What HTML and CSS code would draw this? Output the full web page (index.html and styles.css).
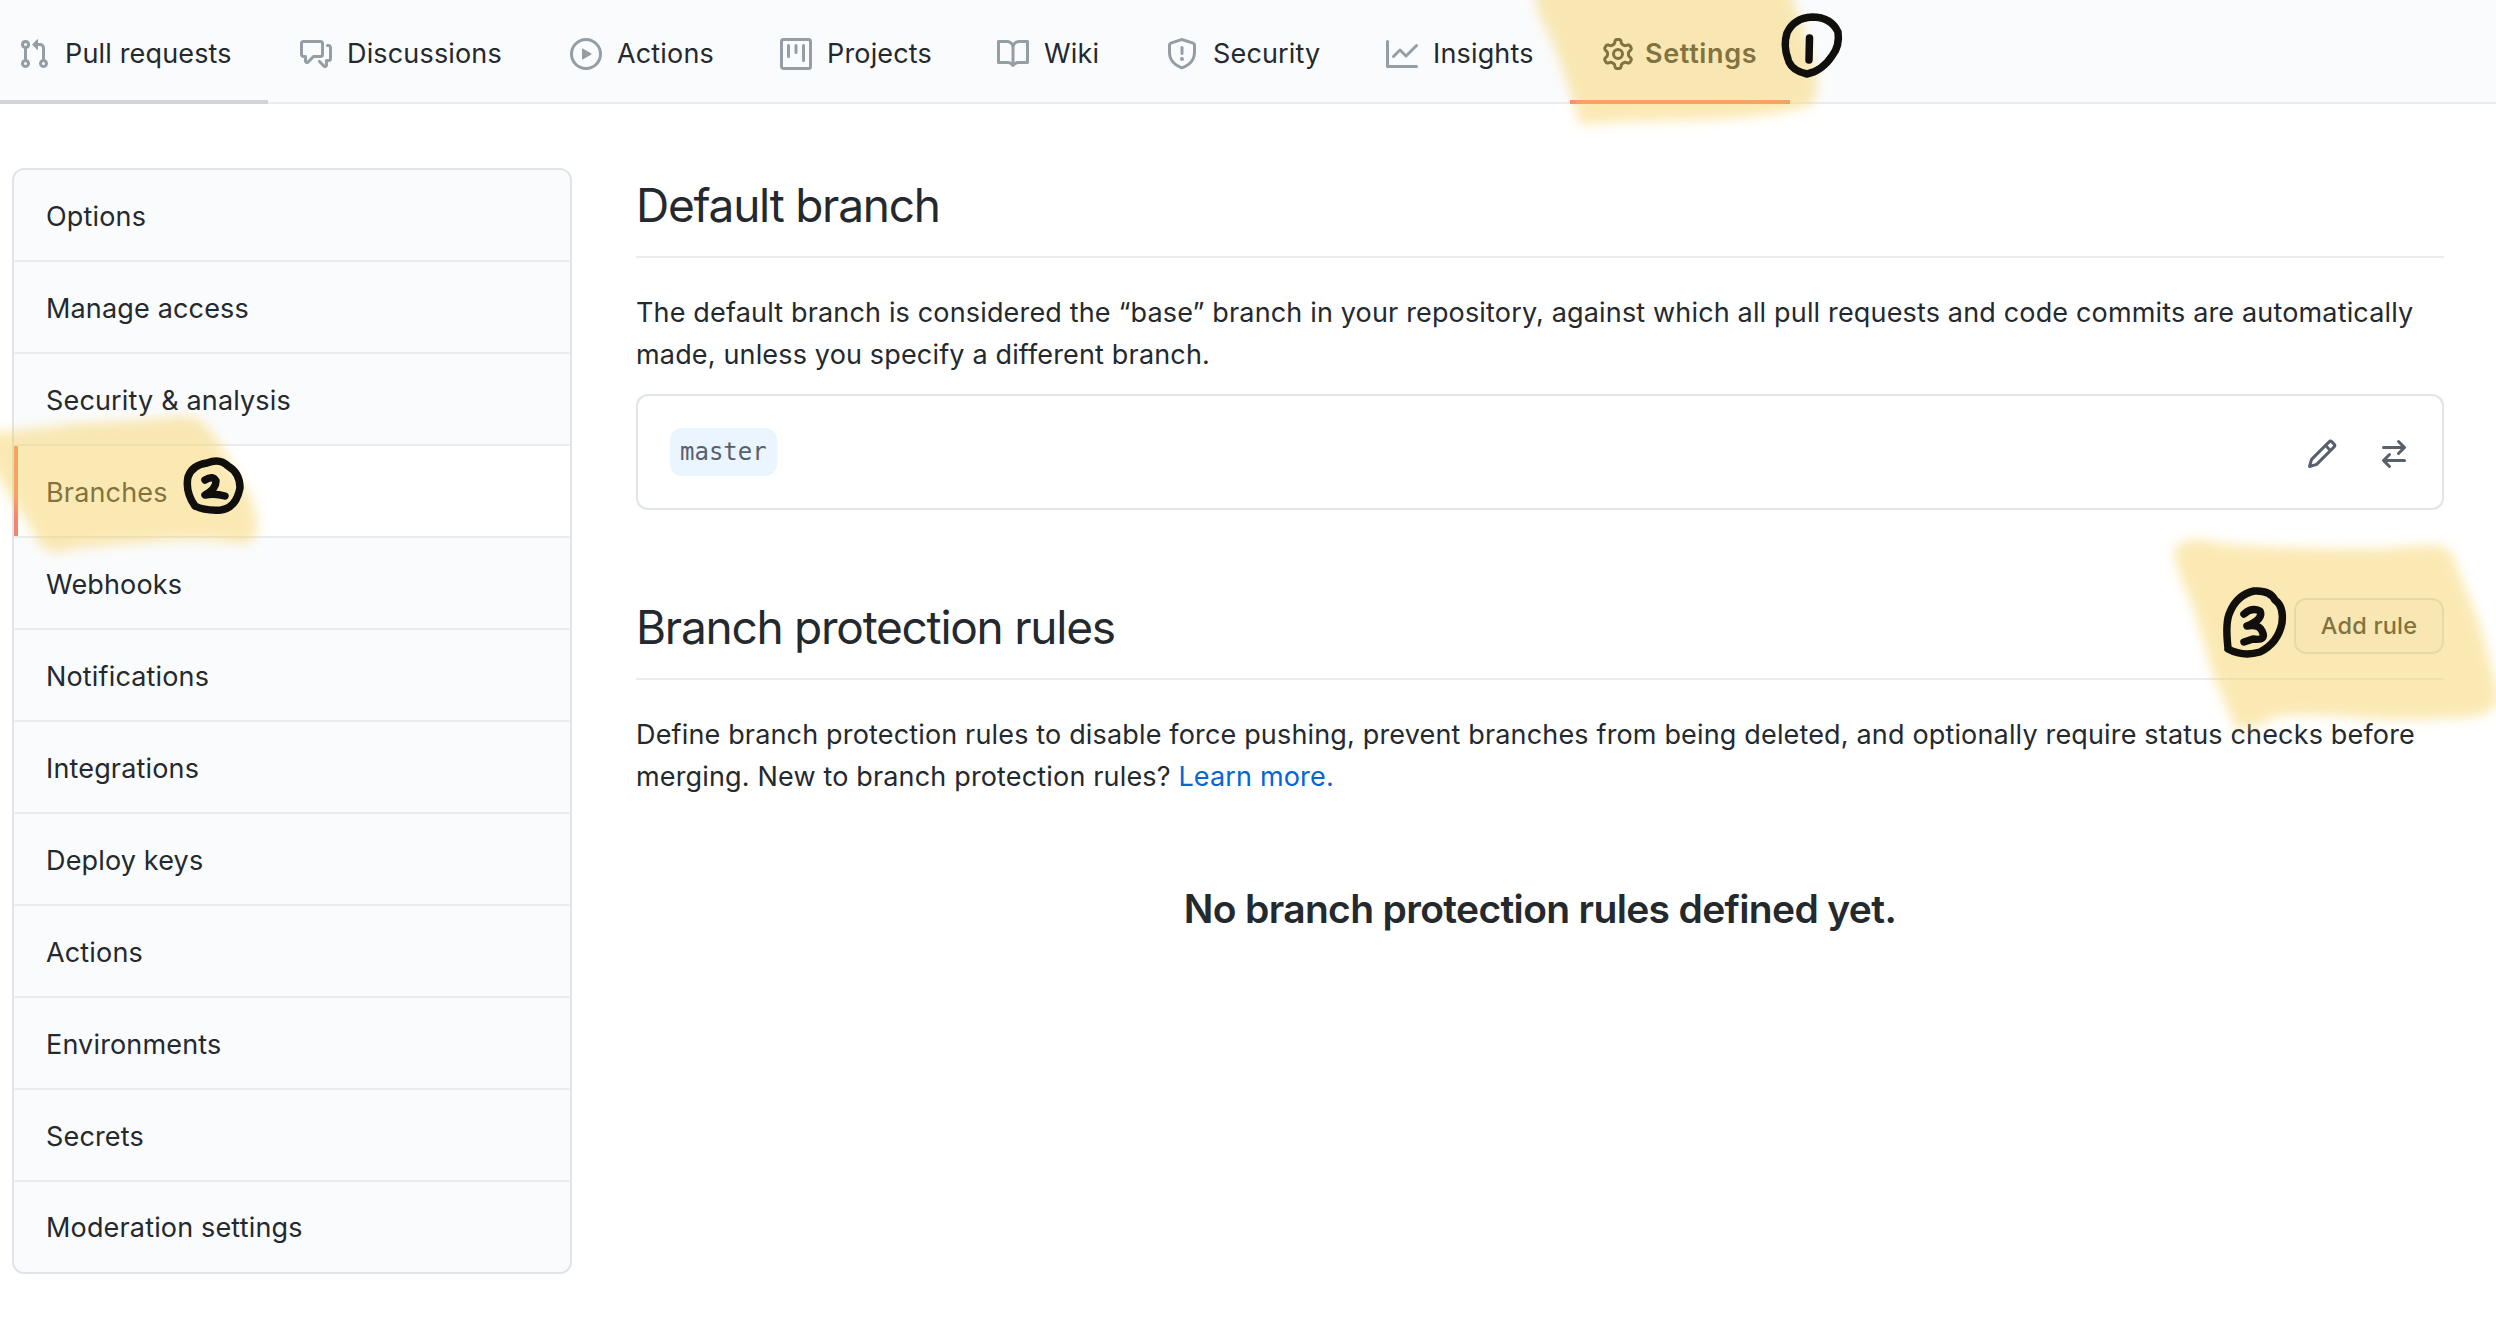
FILE: index.html
```html
<!DOCTYPE html>
<html lang="en">
<head>
<meta charset="utf-8">
<title>Branches</title>
<link rel="stylesheet" href="styles.css">
</head>
<body>
<nav class="tabs">
  <a class="tab tab-hover"><svg class="icon" viewBox="0 0 16 16"><path fill-rule="evenodd" d="M7.177 3.073L9.573.677A.25.25 0 0110 .854v4.792a.25.25 0 01-.427.177L7.177 3.427a.25.25 0 010-.354zM3.75 2.5a.75.75 0 100 1.5.75.75 0 000-1.5zm-2.25.75a2.25 2.25 0 113 2.122v5.256a2.251 2.251 0 11-1.5 0V5.372A2.25 2.25 0 011.5 3.25zM11 2.5h-1V4h1a1 1 0 011 1v5.628a2.251 2.251 0 101.5 0V5A2.5 2.5 0 0011 2.5zm1 10.25a.75.75 0 111.5 0 .75.75 0 01-1.5 0zM3.75 12a.75.75 0 100 1.5.75.75 0 000-1.5z"/></svg><span>Pull requests</span></a>
  <a class="tab"><svg class="icon" viewBox="0 0 16 16"><path fill-rule="evenodd" d="M1.5 2.75a.25.25 0 01.25-.25h8.5a.25.25 0 01.25.25v5.5a.25.25 0 01-.25.25h-3.5a.75.75 0 00-.53.22L3.5 11.44V9.25a.75.75 0 00-.75-.75h-1a.25.25 0 01-.25-.25v-5.5zM1.75 1A1.75 1.75 0 000 2.75v5.5C0 9.216.784 10 1.75 10H2v1.543a1.457 1.457 0 002.487 1.03L7.061 10h3.189A1.75 1.75 0 0012 8.25v-5.5A1.75 1.75 0 0010.25 1h-8.5zM14.5 4.75a.25.25 0 00-.25-.25h-.5a.75.75 0 110-1.5h.5c.966 0 1.75.784 1.75 1.75v5.5A1.75 1.75 0 0114.25 12H14v1.543a1.457 1.457 0 01-2.487 1.03L9.22 12.28a.75.75 0 111.06-1.06l2.22 2.22v-2.19a.75.75 0 01.75-.75h1a.25.25 0 00.25-.25v-5.5z"/></svg><span>Discussions</span></a>
  <a class="tab"><svg class="icon" viewBox="0 0 16 16"><path fill-rule="evenodd" d="M1.5 8a6.5 6.5 0 1113 0 6.5 6.5 0 01-13 0zM8 0a8 8 0 100 16A8 8 0 008 0zM6.379 5.227A.25.25 0 006 5.442v5.117a.25.25 0 00.379.214l4.264-2.559a.25.25 0 000-.428L6.379 5.227z"/></svg><span>Actions</span></a>
  <a class="tab"><svg class="icon" viewBox="0 0 16 16"><path fill-rule="evenodd" d="M1.75 0A1.75 1.75 0 000 1.75v12.5C0 15.216.784 16 1.75 16h12.5A1.75 1.75 0 0016 14.25V1.75A1.75 1.75 0 0014.25 0H1.75zM1.5 1.75a.25.25 0 01.25-.25h12.5a.25.25 0 01.25.25v12.5a.25.25 0 01-.25.25H1.75a.25.25 0 01-.25-.25V1.75zM11.75 3a.75.75 0 00-.75.75v7.5a.75.75 0 001.5 0v-7.5a.75.75 0 00-.75-.75zm-8.25.75a.75.75 0 011.5 0v5.5a.75.75 0 01-1.5 0v-5.5zM8 3a.75.75 0 00-.75.75v3.5a.75.75 0 001.5 0v-3.5A.75.75 0 008 3z"/></svg><span>Projects</span></a>
  <a class="tab"><svg class="icon" viewBox="0 0 16 16"><path fill-rule="evenodd" d="M0 1.75A.75.75 0 01.75 1h4.253c1.227 0 2.317.59 3 1.501A3.744 3.744 0 0111.006 1h4.245a.75.75 0 01.75.75v10.5a.75.75 0 01-.75.75h-4.507a2.25 2.25 0 00-1.591.659l-.622.621a.75.75 0 01-1.06 0l-.622-.621A2.25 2.25 0 005.258 13H.75a.75.75 0 01-.75-.75V1.75zm8.755 3a2.25 2.25 0 012.25-2.25H14.5v9h-3.757c-.71 0-1.4.201-1.992.572l.004-7.322zm-1.504 7.324l.004-5.073-.002-2.253A2.25 2.25 0 005.003 2.5H1.5v9h3.757a3.75 3.75 0 011.994.574z"/></svg><span>Wiki</span></a>
  <a class="tab"><svg class="icon" viewBox="0 0 16 16"><path fill-rule="evenodd" d="M7.467.133a1.75 1.75 0 011.066 0l5.25 1.68A1.75 1.75 0 0115 3.48V7c0 1.566-.32 3.182-1.303 4.682-.983 1.498-2.585 2.813-5.032 3.855a1.7 1.7 0 01-1.33 0c-2.447-1.042-4.049-2.357-5.032-3.855C1.32 10.182 1 8.566 1 7V3.48a1.75 1.75 0 011.217-1.667l5.25-1.68zm.61 1.429a.25.25 0 00-.153 0l-5.25 1.68a.25.25 0 00-.174.238V7c0 1.358.275 2.666 1.057 3.86.784 1.194 2.121 2.34 4.366 3.297a.2.2 0 00.154 0c2.245-.956 3.582-2.104 4.366-3.298C13.225 9.666 13.5 8.36 13.5 7V3.48a.25.25 0 00-.174-.237l-5.25-1.68zM9 10.5a1 1 0 11-2 0 1 1 0 012 0zm-.25-5.75a.75.75 0 10-1.5 0v3a.75.75 0 001.5 0v-3z"/></svg><span>Security</span></a>
  <a class="tab"><svg class="icon" viewBox="0 0 16 16"><path fill-rule="evenodd" d="M1.5 1.75a.75.75 0 00-1.5 0v12.5c0 .414.336.75.75.75h14.5a.75.75 0 000-1.5H1.5V1.75zm14.28 2.53a.75.75 0 00-1.06-1.06L10 7.94 7.53 5.47a.75.75 0 00-1.06 0L3.22 8.72a.75.75 0 001.06 1.06L7 7.06l2.47 2.47a.75.75 0 001.06 0l5.25-5.25z"/></svg><span>Insights</span></a>
  <a class="tab tab-selected"><svg class="icon" viewBox="0 0 16 16"><path fill-rule="evenodd" d="M7.429 1.525a6.593 6.593 0 011.142 0c.036.003.108.036.137.146l.289 1.105c.147.56.55.967.997 1.189.174.086.341.183.501.29.417.278.97.423 1.53.27l1.102-.303c.11-.03.175.016.195.046.219.31.41.641.573.989.014.031.022.11-.059.19l-.815.806c-.411.406-.562.957-.53 1.456a4.588 4.588 0 010 .582c-.032.499.119 1.05.53 1.456l.815.806c.08.08.073.159.059.19a6.494 6.494 0 01-.573.99c-.02.029-.086.074-.195.045l-1.103-.303c-.559-.153-1.112-.008-1.529.27-.16.107-.327.204-.5.29-.449.222-.851.628-.998 1.189l-.289 1.105c-.029.11-.101.143-.137.146a6.613 6.613 0 01-1.142 0c-.036-.003-.108-.037-.137-.146l-.289-1.105c-.147-.56-.55-.967-.997-1.189a4.502 4.502 0 01-.501-.29c-.417-.278-.97-.423-1.53-.27l-1.102.303c-.11.03-.175-.016-.195-.046a6.492 6.492 0 01-.573-.989c-.014-.031-.022-.11.059-.19l.815-.806c.411-.406.562-.957.53-1.456a4.587 4.587 0 010-.582c.032-.499-.119-1.05-.53-1.456l-.815-.806c-.08-.08-.073-.159-.059-.19a6.44 6.44 0 01.573-.99c.02-.029.086-.075.195-.045l1.103.303c.559.153 1.112.008 1.529-.27.16-.107.327-.204.5-.29.449-.222.851-.628.998-1.189l.289-1.105c.029-.11.101-.143.137-.146zM8 0c-.236 0-.47.01-.701.03-.743.065-1.29.615-1.458 1.261l-.29 1.106c-.017.066-.078.158-.211.224a5.994 5.994 0 00-.668.386c-.123.082-.233.09-.3.071L3.27 2.776c-.644-.177-1.392.02-1.82.63a7.977 7.977 0 00-.704 1.217c-.315.675-.111 1.422.363 1.891l.815.806c.05.048.098.147.088.294a6.084 6.084 0 000 .772c.01.147-.038.246-.088.294l-.815.806c-.474.469-.678 1.216-.363 1.891.2.428.436.835.704 1.218.428.609 1.176.806 1.82.63l1.103-.303c.066-.019.176-.011.299.071.213.143.436.272.668.386.133.066.194.158.212.224l.289 1.106c.169.646.715 1.196 1.458 1.26a8.094 8.094 0 001.402 0c.743-.064 1.29-.614 1.458-1.26l.29-1.106c.017-.066.078-.158.211-.224a5.98 5.98 0 00.668-.386c.123-.082.233-.09.3-.071l1.102.302c.644.177 1.392-.02 1.82-.63.268-.382.505-.789.704-1.217.315-.675.111-1.422-.364-1.891l-.814-.806c-.05-.048-.098-.147-.088-.294a6.1 6.1 0 000-.772c-.01-.147.039-.246.088-.294l.814-.806c.475-.469.679-1.216.364-1.891a7.992 7.992 0 00-.704-1.218c-.428-.609-1.176-.806-1.82-.63l-1.103.303c-.066.019-.176.011-.299-.071a5.991 5.991 0 00-.668-.386c-.133-.066-.194-.158-.212-.224L10.16 1.29C9.99.645 9.444.095 8.701.031A8.094 8.094 0 008 0zM8 5a3 3 0 100 6 3 3 0 000-6zm0 1.5a1.5 1.5 0 110 3 1.5 1.5 0 010-3z"/></svg><span>Settings</span></a>
</nav>

<div class="page">
  <aside class="menu">
    <a class="menu-item">Options</a>
    <a class="menu-item">Manage access</a>
    <a class="menu-item">Security &amp; analysis</a>
    <a class="menu-item menu-current">Branches</a>
    <a class="menu-item">Webhooks</a>
    <a class="menu-item">Notifications</a>
    <a class="menu-item">Integrations</a>
    <a class="menu-item">Deploy keys</a>
    <a class="menu-item">Actions</a>
    <a class="menu-item">Environments</a>
    <a class="menu-item">Secrets</a>
    <a class="menu-item">Moderation settings</a>
  </aside>

  <main class="content">
    <header class="subhead"><h2>Default branch</h2></header>
    <p class="text">The default branch is considered the “base” branch in your repository, against which all pull requests and code commits are automatically<br>made, unless you specify a different branch.</p>
    <div class="box">
      <span class="branch-name">master</span>
      <div class="box-actions">
        <svg class="icon" viewBox="0 0 16 16"><path fill-rule="evenodd" d="M11.013 1.427a1.75 1.75 0 012.474 0l1.086 1.086a1.75 1.75 0 010 2.474l-8.61 8.61c-.21.21-.47.364-.756.445l-3.251.93a.75.75 0 01-.927-.928l.929-3.25a1.75 1.75 0 01.445-.758l8.61-8.61zm1.414 1.06a.25.25 0 00-.354 0L10.811 3.75l1.439 1.44 1.263-1.263a.25.25 0 000-.354l-1.086-1.086zM11.189 6.25L9.75 4.81l-6.286 6.287a.25.25 0 00-.064.108l-.558 1.953 1.953-.558a.249.249 0 00.108-.064l6.286-6.286z"/></svg>
        <svg class="icon" viewBox="0 0 16 16"><path fill-rule="evenodd" d="M5.22 14.78a.75.75 0 001.06-1.06L4.56 12h8.69a.75.75 0 000-1.5H4.56l1.72-1.72a.75.75 0 00-1.06-1.06l-3 3a.75.75 0 000 1.06l3 3zm5.56-6.5a.75.75 0 11-1.06-1.06l1.72-1.72H2.75a.75.75 0 010-1.5h8.69L9.72 2.28a.75.75 0 011.06-1.06l3 3a.75.75 0 010 1.06l-3 3z"/></svg>
      </div>
    </div>

    <header class="subhead subhead-rules"><h2>Branch protection rules</h2><button class="btn">Add rule</button></header>
    <p class="text">Define branch protection rules to disable force pushing, prevent branches from being deleted, and optionally require status checks before<br>merging. New to branch protection rules? <a class="link">Learn more.</a></p>
    <h3 class="blank">No branch protection rules defined yet.</h3>
  </main>
</div>

<svg class="marker" viewBox="0 0 2496 1338">
  <defs><filter id="soft" x="-10%" y="-20%" width="120%" height="140%"><feGaussianBlur stdDeviation="6"/></filter></defs>
  <g class="highlight" filter="url(#soft)">
    <path d="M1530-30L1538 12L1556 50L1568 85L1580 125Q1620 121 1700 120Q1770 118 1812 105Q1821 88 1813 60L1800 20L1782-30Z"/>
    <path d="M-30 434Q40 429 80 423Q150 421 180 416Q198 415 206 426Q227 450 234 472Q258 500 258 532Q252 546 234 543Q200 536 140 543Q90 545 52 553Q38 547 26 520Q6 495 -10 460L-30 440Z"/>
    <path d="M2173 550Q2188 533 2218 543Q2250 548 2380 549Q2420 545 2438 545Q2452 547 2458 570L2480 625L2499 695Q2500 716 2460 718Q2400 722 2350 717Q2290 713 2272 718Q2250 735 2234 726L2213 675L2194 610Q2178 575 2173 550Z"/>
  </g>
  <g class="pen">
    <path d="M1788 59Q1783 45 1787 33Q1794 18 1812 17Q1831 17 1838 32Q1840 46 1832 56Q1822 71 1807 74Q1793 71 1789 62M1809.500 38L1809 60"/>
    <path d="M195 506Q185 492 188 477Q192 465 207 463Q220 458 228 466Q240 473 240 488Q236 508 221 510Q205 511 195 506M205 480Q213 475 216 481Q216 489 205 495Q215 493 225 496"/>
    <path d="M2228 648Q2225 622 2230 612Q2237 595 2254 591Q2270 590 2275 600Q2284 606 2282 623Q2278 643 2260 652Q2243 657 2228 649M2244 614Q2252 607 2260 611Q2264 619 2247 626Q2259 624 2262 631Q2267 641 2253 639L2244 642"/>
  </g>
</svg>
</body>
</html>
```
FILE: styles.css
```css
* { box-sizing: border-box; }

body {
  margin: 0;
  width: 2496px;
  height: 1338px;
  overflow: hidden;
  background: #fff;
  color: #24292e;
  font: 400 27px/42px Inter, "Liberation Sans", sans-serif;
  letter-spacing: .16px;
}

.icon { width: 32px; height: 32px; flex: none; fill: currentColor; }

.tabs {
  display: grid;
  grid-template-columns: 268px 270px 210px 217px 169px 220px 216px 220px;
  height: 104px;
  background: #fafbfc;
  border-bottom: 2px solid #eaecef;
}
.tab {
  display: flex;
  align-items: center;
  gap: 15px;
  height: 104px;
  padding: 8px 0 0 32px;
  border-bottom: 4px solid transparent;
  white-space: nowrap;
}
.tab .icon { color: #959da5; }
.tab-hover { padding-left: 18px; border-bottom-color: #d1d5da; }
.tab-selected { border-bottom-color: #f9826c; font-weight: 600; gap: 11px; letter-spacing: .65px; }
.tab-selected .icon { color: #24292e; }

.page {
  display: grid;
  grid-template-columns: 560px 1808px;
  column-gap: 64px;
  align-items: start;
  padding: 64px 0 0 12px;
}

.menu {
  overflow: hidden;
  border: 2px solid #e1e4e8;
  border-radius: 12px;
  background: #fafbfc;
}
.menu-item {
  display: flex;
  align-items: center;
  height: 92px;
  padding: 4px 0 0 32px;
  border-bottom: 2px solid #eaecef;
}
.menu-item:last-child { height: 90px; padding-top: 2px; border-bottom: 0; }
.menu-current {
  background: #fff;
  box-shadow: inset 4px 0 #f9826c;
}

.content { display: flex; flex-direction: column; }
.subhead {
  display: flex;
  justify-content: space-between;
  align-items: flex-start;
  height: 90px;
  border-bottom: 2px solid #eaecef;
}
h2 { margin: 1px 0 0; font-size: 46px; line-height: 72px; font-weight: 400; letter-spacing: -1.25px; }
.text { margin: 34px 0 18px; white-space: nowrap; }
.link { color: #0366d6; }

.box {
  display: flex;
  align-items: center;
  justify-content: space-between;
  height: 116px;
  padding: 0 32px;
  border: 2px solid #e1e4e8;
  border-radius: 12px;
}
.branch-name {
  height: 48px;
  padding: 0 10px;
  border-radius: 12px;
  background: #eaf5ff;
  color: #586069;
  font: 24px/49px "DejaVu Sans Mono", "Liberation Mono", monospace;
  letter-spacing: 0;
}
.box-actions { display: flex; gap: 40px; color: #586069; padding-top: 3px; }

.subhead-rules { margin-top: 80px; }
.btn {
  width: 150px;
  height: 56px;
  margin-top: 8px;
  padding: 0;
  border: 2px solid #dfe1e4;
  border-radius: 12px;
  background: #fafbfc;
  color: #24292e;
  font: 500 23.500px/50px Inter, "Liberation Sans", sans-serif;
  letter-spacing: .2px;
}
.blank { margin: 63px 0 0; text-align: center; font-size: 39px; line-height: 60px; font-weight: 600; letter-spacing: -.66px; }

.marker { position: absolute; left: 0; top: 0; width: 2496px; height: 1338px; pointer-events: none; }
.highlight { fill: rgb(247, 207, 86); opacity: .44; }
.pen { fill: none; stroke: #100f0b; stroke-width: 7.500px; stroke-linecap: round; stroke-linejoin: round; }
```
